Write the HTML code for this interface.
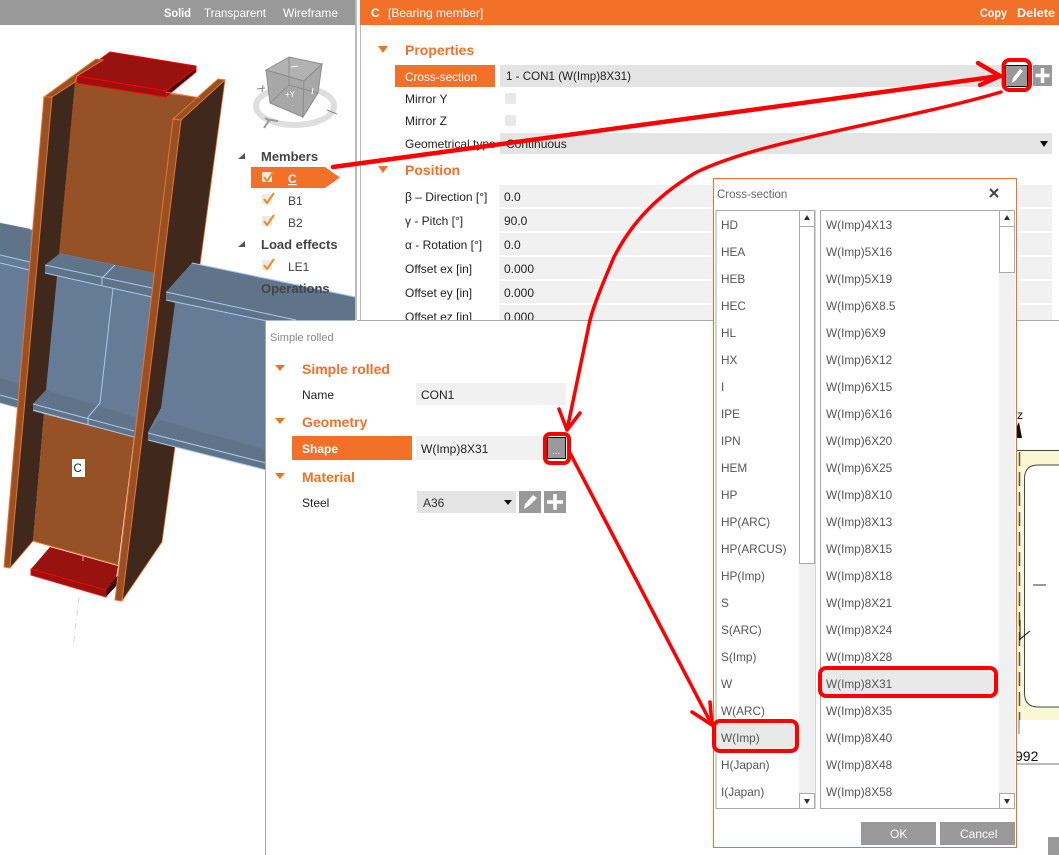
<!DOCTYPE html>
<html><head><meta charset="utf-8"><style>
html,body{margin:0;padding:0;background:#fff;overflow:hidden}
svg{display:block;fill:#222}
text{font-family:"Liberation Sans",sans-serif;font-size:12px}
.h{font-size:14px;font-weight:bold;fill:#f37028}
.t{font-weight:bold;fill:#444;font-size:13px}
.l text{fill:#555;font-size:11.8px}
.w{fill:#fff}
</style></head><body>
<svg width="1059" height="855" viewBox="0 0 1059 855" xmlns="http://www.w3.org/2000/svg">
<rect width="1059" height="855" fill="#fff"/>
<!-- beam body -->
<polygon points="0,223 355,297 355,321 266,321 266,470 148,440 33,411 0,403" fill="#667c96"/>
<line x1="0" y1="223" x2="355" y2="297" stroke="#a9c8ee"/>
<polygon points="0,223 30,229 30,262 0,255" fill="#5f7389"/>
<polygon points="0,378 20,384 20,408 0,403" fill="#5f7389"/>
<path d="M0 255L30 262M0 263L29 270M0 395L18 400M0 403L18 408" stroke="#a9c8ee" fill="none"/>
<!-- web -->
<polygon points="75,80 200,98 173,119 155,273 59,253" fill="#965226"/>
<polygon points="44,414 134,437 118,565 33,541" fill="#965226"/>
<line x1="33" y1="541" x2="118" y2="565" stroke="#f37028"/>
<!-- dark faces -->
<polygon points="52,97 75,82 57,276 46,390 33,404 33,411 44,414 33,541 10,568" fill="#40291c"/>
<polygon points="181,120 225,80 200,265 192,263 166,292 166,300 175,303 161,408 148,432 148,440 175,447 162,542 122,601" fill="#40291c"/>
<path d="M225 80L200 265M175 447L162 542L122 601M33 541L10 568" fill="none" stroke="#e8742a" stroke-width=".8"/>
<!-- beam flanges over column -->
<polygon points="59,254 153,273 152,297 45,273 45,265" fill="#5f7389"/>
<polygon points="46,390 135,417 134,437 33,410 33,404" fill="#5f7389"/>
<polygon points="192,263 355,297 355,321 267,321 166,300 166,292" fill="#5f7389"/>
<polygon points="160,420 266,450 266,470 148,440 148,433" fill="#5f7389"/>
<g stroke="#a9c8ee" fill="none">
<path d="M45 265L152 288M45 273L152 297"/>
<path d="M115 265L102 278V285M113 288L100 403L88 417V424"/>
<path d="M33 404L134 431M33 410L134 437"/>
<path d="M166 292L296 320M166 300L267 321"/>
<path d="M148 433L266 463M148 440L266 470"/>
<path d="M192 263L355 297"/>
</g>
<!-- plates -->
<polygon points="196,68 166,91 167,96 196,72" fill="#2a0808" stroke="#e00" stroke-width=".8"/>
<polygon points="110,52 196,66 196,68 166,91 77,76" fill="#98120f" stroke="#f00" stroke-width="1"/>
<polygon points="77,76 166,91 166,97 77,83" fill="#98120f" stroke="#f00" stroke-width="1"/>
<polygon points="50,547 118,566 116,578 106,590 31,569" fill="#98120f"/>
<polygon points="31,569 106,590 106,597 31,575" fill="#98120f" stroke="#f00" stroke-width="1"/>
<polygon points="106,590 118,575 118,584 106,597" fill="#3a0a0a"/>
<!-- flange strips -->
<polygon points="44,97 52,97 10,568 4,567" fill="#965226" stroke="#f37028" stroke-width="1"/>
<polygon points="173,119 181,120 122,601 115,600" fill="#965226" stroke="#f37028" stroke-width="1"/>
<polygon points="173,119 218,79 225,80 181,120" fill="#965226" stroke="#f37028" stroke-width="1"/>
<polygon points="44,97 96,59 103,60 77,76 75,82 52,97" fill="#965226" stroke="#f37028" stroke-width="1"/>
<line x1="166" y1="92" x2="200" y2="98" stroke="#f37028" stroke-width="1"/>
<path d="M83 556V561" stroke="#a9b8d0"/>
<path d="M79 597L73 647" stroke="#c8d8f0" stroke-dasharray="6 3 1 3" fill="none"/>
<rect x="72" y="459" width="13" height="18" fill="#fff"/>
<text x="73.500" y="472" style="font-size:11.500px" fill="#222">C</text>
<!-- top bars -->
<rect x="0" y="0" width="355" height="25" fill="#999"/>
<rect x="355" y="0" width="2" height="320" fill="#bbb"/>
<text class="w" x="164" y="17" textLength="27" lengthAdjust="spacingAndGlyphs" style="font-weight:bold">Solid</text>
<text class="w" x="204" y="17" textLength="62" lengthAdjust="spacingAndGlyphs">Transparent</text>
<text class="w" x="283" y="17" textLength="55" lengthAdjust="spacingAndGlyphs">Wireframe</text>
<rect x="360" y="0" width="699" height="25" fill="#f37028"/>
<text class="w" x="371" y="17" style="font-weight:bold">C</text>
<text class="w" x="388" y="17">[Bearing member]</text>
<text class="w" x="980" y="17" textLength="27" lengthAdjust="spacingAndGlyphs" style="font-weight:bold">Copy</text>
<text class="w" x="1017" y="17" textLength="38" lengthAdjust="spacingAndGlyphs" style="font-weight:bold">Delete</text>
<!-- cube -->
<ellipse cx="295" cy="106" rx="39" ry="19" fill="none" stroke="#dedede" stroke-width="6"/>
<g stroke="#8c8c8c" stroke-width="1">
<polygon points="266,70 304,81 303,117 270,103" fill="#a3a3a3" fill-opacity=".95"/>
<polygon points="266,70 289,57 322,64 304,81" fill="#b2b2b2"/>
<polygon points="304,81 322,64 318,93 303,117" fill="#a8a8a8"/>
<path d="M289 57L289 85M270 103L289 85L318 93" fill="none" stroke="#8f8f8f"/>
</g>
<path d="M264 128L270 119M270 120L278 121M265 118L270 121" stroke="#9a9a9a" stroke-width="2" fill="none"/>
<path d="M257 89L265 88M263 85L262 92M327 110L337 114" stroke="#888" fill="none"/>
<path d="M291 67L298 66M313 88L312 94" stroke="#fff" fill="none"/>
<text class="w" x="285" y="97" style="font-size:8px">+Y</text>
<!-- tree -->
<polygon points="238,159 245,159 245,153" fill="#555"/>
<polygon points="238,247 245,247 245,241" fill="#555"/>
<text class="t" x="261" y="161">Members</text>
<polygon points="251,167 325,167 340,177.500 325,188 251,188" fill="#f37028"/>
<text class="w" x="288" y="183" style="font-weight:bold;text-decoration:underline">C</text>
<text x="288" y="205" fill="#444">B1</text>
<text x="288" y="227" fill="#444">B2</text>
<text class="t" x="261" y="249">Load effects</text>
<text x="288" y="271" fill="#444">LE1</text>
<text class="t" x="261" y="293">Operations</text>
<g fill="#eaeaea"><rect x="262" y="172" width="10" height="10" rx="1"/><rect x="262" y="194" width="10" height="10" rx="1"/><rect x="262" y="216" width="10" height="10" rx="1"/><rect x="262" y="260" width="10" height="10" rx="1"/></g>
<g fill="none" stroke="#f58a1f" stroke-width="2"><path d="M264 177L267 181L274 171"/><path d="M264 199L267 203L274 193"/><path d="M264 221L267 225L274 215"/><path d="M264 265L267 269L274 259"/></g>
<!-- right panel -->
<rect x="360" y="25" width="699" height="295" fill="#fff"/>
<rect x="360" y="25" width="1" height="295" fill="#bbb"/>
<polygon points="378,46 388,46 383,53" fill="#f37028"/>
<polygon points="378,166 388,166 383,173" fill="#f37028"/>
<text class="h" x="405" y="55">Properties</text>
<text class="h" x="405" y="175">Position</text>
<rect x="395" y="65" width="100" height="22" fill="#f37028"/>
<text class="w" x="405" y="81" textLength="72" lengthAdjust="spacingAndGlyphs">Cross-section</text>
<rect x="500" y="65" width="501" height="22" fill="#e4e4e4"/>
<text x="506" y="80" textLength="125" lengthAdjust="spacingAndGlyphs">1 - CON1 (W(Imp)8X31)</text>
<text x="405" y="103">Mirror Y</text>
<text x="405" y="125">Mirror Z</text>
<rect x="505" y="93" width="11" height="11" rx="2" fill="#e8e8e8"/>
<rect x="505" y="115" width="11" height="11" rx="2" fill="#e8e8e8"/>
<text x="405" y="148">Geometrical type</text>
<rect x="500" y="133" width="552" height="21" fill="#e4e4e4"/>
<text x="506" y="148">Continuous</text>
<polygon points="1040,141 1048,141 1044,147" fill="#111"/>
<g fill="#f1f1f1">
<rect x="499" y="185" width="553" height="22"/><rect x="499" y="209" width="553" height="22"/><rect x="499" y="233" width="553" height="22"/><rect x="499" y="257" width="553" height="22"/><rect x="499" y="281" width="553" height="22"/><rect x="499" y="305" width="553" height="15"/>
</g>
<text x="405" y="201">β – Direction [°]</text><text x="504" y="201">0.0</text>
<text x="405" y="225">γ - Pitch [°]</text><text x="504" y="225">90.0</text>
<text x="405" y="249">α - Rotation [°]</text><text x="504" y="249">0.0</text>
<text x="405" y="273">Offset ex [in]</text><text x="504" y="273">0.000</text>
<text x="405" y="297">Offset ey [in]</text><text x="504" y="297">0.000</text>
<text x="405" y="321">Offset ez [in]</text><text x="504" y="321">0.000</text>
<!-- pencil + plus -->
<rect x="1005.500" y="65.500" width="22" height="21" fill="#999" stroke="#111"/>
<path d="M1012 83L1013 78L1020 69L1023 71L1016 80Z" fill="#fff"/>
<rect x="1033" y="65" width="19" height="21" fill="#999"/>
<path d="M1042.500 68V83M1035.500 75.500H1049.500" stroke="#fff" stroke-width="3.500"/>
<!-- simple rolled dialog -->
<rect x="266" y="320.500" width="793" height="535" fill="#fff"/>
<path d="M357 320.500H1059M265.500 321V855" stroke="#aaa" fill="none"/>
<text x="270" y="341" style="font-size:11px" fill="#888">Simple rolled</text>
<polygon points="275,365 285,365 280,371" fill="#f37028"/>
<polygon points="275,418 285,418 280,424" fill="#f37028"/>
<polygon points="275,473 285,473 280,479" fill="#f37028"/>
<text class="h" x="302" y="374">Simple rolled</text>
<text class="h" x="302" y="427">Geometry</text>
<text class="h" x="302" y="482">Material</text>
<text x="302" y="399">Name</text>
<rect x="416" y="383" width="150" height="22" fill="#f1f1f1"/>
<text x="421" y="399">CON1</text>
<rect x="292" y="436" width="120" height="24" fill="#f37028"/>
<text class="w" x="302" y="453" style="font-weight:bold">Shape</text>
<rect x="416" y="436" width="127" height="24" fill="#f1f1f1"/>
<text x="421" y="453">W(Imp)8X31</text>
<rect x="547.500" y="437.500" width="18" height="21" fill="#999" stroke="#111"/>
<text class="w" x="552" y="454" style="font-size:10px">...</text>
<text x="302" y="507">Steel</text>
<rect x="417" y="491" width="99" height="22" fill="#e4e4e4"/>
<text x="423" y="507" fill="#333">A36</text>
<polygon points="504,500 512,500 508,505" fill="#111"/>
<rect x="519" y="491" width="22" height="22" fill="#999"/>
<path d="M524 509L525 504L533 495L537 498L529 506Z" fill="#fff"/>
<rect x="544" y="491" width="22" height="22" fill="#999"/>
<path d="M555 494V510M547 502H563" stroke="#fff" stroke-width="3.500"/>
<!-- drawing behind -->
<text x="1017" y="419" style="font-size:12px" fill="#111">z</text>
<polygon points="1017,438 1022,438 1019,422 1017,426" fill="#111"/>
<rect x="1017" y="450" width="42" height="270" fill="#f8f8d2"/>
<path d="M1017 450.500H1059" stroke="#444"/>
<path d="M1060 465H1038Q1024.500 465 1024.500 479V693Q1024.500 707 1038 707H1060Z" fill="#fff" stroke="#444"/>
<path d="M1019.500 452V720" stroke="#555" stroke-dasharray="14 6" stroke-width="1.500"/>
<path d="M1033 585H1046" stroke="#333"/>
<path d="M1019 640L1030 631M1020 620V640" stroke="#111"/>
<path d="M1019 720V734" stroke="#777"/>
<text x="1015" y="761" style="font-size:14px" fill="#111">992</text>
<path d="M1017 764H1059" stroke="#777"/>
<rect x="1048" y="837" width="11" height="18" fill="#999"/>
<!-- cross-section dialog -->
<rect x="713.500" y="178.500" width="303" height="669" fill="#fff" stroke="#f37028"/>
<text x="717" y="198" style="font-size:11.500px" fill="#666">Cross-section</text>
<path d="M990 189L998 197M998 189L990 197" stroke="#444" stroke-width="2" fill="none"/>
<rect x="716" y="210.500" width="99" height="598" fill="#fff" stroke="#aaa"/>
<rect x="820.500" y="210.500" width="194" height="598" fill="#fff" stroke="#aaa"/>
<rect x="799" y="211" width="16" height="597" fill="#f0f0f0"/>
<rect x="999" y="211" width="16" height="597" fill="#f0f0f0"/>
<rect x="799.500" y="226.500" width="15" height="337" fill="#fff" stroke="#aaa"/>
<rect x="999.500" y="226.500" width="15" height="46" fill="#fff" stroke="#aaa"/>
<rect x="799.500" y="210.500" width="15" height="16" fill="#fff" stroke="#aaa"/>
<rect x="999.500" y="210.500" width="15" height="16" fill="#fff" stroke="#aaa"/>
<rect x="799.500" y="793.500" width="15" height="15" fill="#fff" stroke="#aaa"/>
<rect x="999.500" y="793.500" width="15" height="15" fill="#fff" stroke="#aaa"/>
<g fill="#333"><polygon points="804,220 810,220 807,215"/><polygon points="1004,220 1010,220 1007,215"/><polygon points="804,799 810,799 807,804"/><polygon points="1004,799 1010,799 1007,804"/></g>
<rect x="717" y="724" width="81" height="26" fill="#e9e9e9"/>
<rect x="821" y="670" width="178" height="26" fill="#e9e9e9"/>
<g class="l" transform="translate(0,1)">
<text x="721" y="228">HD</text><text x="721" y="255">HEA</text><text x="721" y="282">HEB</text><text x="721" y="309">HEC</text><text x="721" y="336">HL</text><text x="721" y="363">HX</text><text x="721" y="390">I</text><text x="721" y="417">IPE</text><text x="721" y="444">IPN</text><text x="721" y="471">HEM</text><text x="721" y="498">HP</text><text x="721" y="525">HP(ARC)</text><text x="721" y="552">HP(ARCUS)</text><text x="721" y="579">HP(Imp)</text><text x="721" y="606">S</text><text x="721" y="633">S(ARC)</text><text x="721" y="660">S(Imp)</text><text x="721" y="687">W</text><text x="721" y="714">W(ARC)</text><text x="721" y="741">W(Imp)</text><text x="721" y="768">H(Japan)</text><text x="721" y="795">I(Japan)</text>
<text x="826" y="228">W(Imp)4X13</text><text x="826" y="255">W(Imp)5X16</text><text x="826" y="282">W(Imp)5X19</text><text x="826" y="309">W(Imp)6X8.5</text><text x="826" y="336">W(Imp)6X9</text><text x="826" y="363">W(Imp)6X12</text><text x="826" y="390">W(Imp)6X15</text><text x="826" y="417">W(Imp)6X16</text><text x="826" y="444">W(Imp)6X20</text><text x="826" y="471">W(Imp)6X25</text><text x="826" y="498">W(Imp)8X10</text><text x="826" y="525">W(Imp)8X13</text><text x="826" y="552">W(Imp)8X15</text><text x="826" y="579">W(Imp)8X18</text><text x="826" y="606">W(Imp)8X21</text><text x="826" y="633">W(Imp)8X24</text><text x="826" y="660">W(Imp)8X28</text><text x="826" y="687">W(Imp)8X31</text><text x="826" y="714">W(Imp)8X35</text><text x="826" y="741">W(Imp)8X40</text><text x="826" y="768">W(Imp)8X48</text><text x="826" y="795">W(Imp)8X58</text>
</g>
<rect x="861" y="822" width="75" height="23" fill="#999"/>
<rect x="940" y="822" width="75" height="23" fill="#999"/>
<text class="w" x="890" y="838">OK</text>
<text class="w" x="960" y="838">Cancel</text>
<!-- red annotations -->
<g fill="none" stroke="#f00" stroke-linecap="round" stroke-linejoin="round">
<rect x="1003.500" y="60" width="26.500" height="30" rx="6" stroke-width="4"/>
<rect x="545" y="434" width="24" height="29" rx="5" stroke-width="4"/>
<rect x="714" y="721" width="83" height="30" rx="6" stroke-width="4"/>
<rect x="820" y="668" width="176" height="28" rx="6" stroke-width="4"/>
<path d="M333 167L1000 76M978 63L1000 76L980 85" stroke-width="4.500"/>
<path d="M1001 92C900 122 760 140 695 173C650 200 628 230 614 257C600 290 594 305 590 320L567 430M559 409L567 430L580 413" stroke-width="3.500"/>
<path d="M570 453L712 725M692 712L712 725L710 702" stroke-width="3.500"/>
</g>
</svg>
</body></html>
